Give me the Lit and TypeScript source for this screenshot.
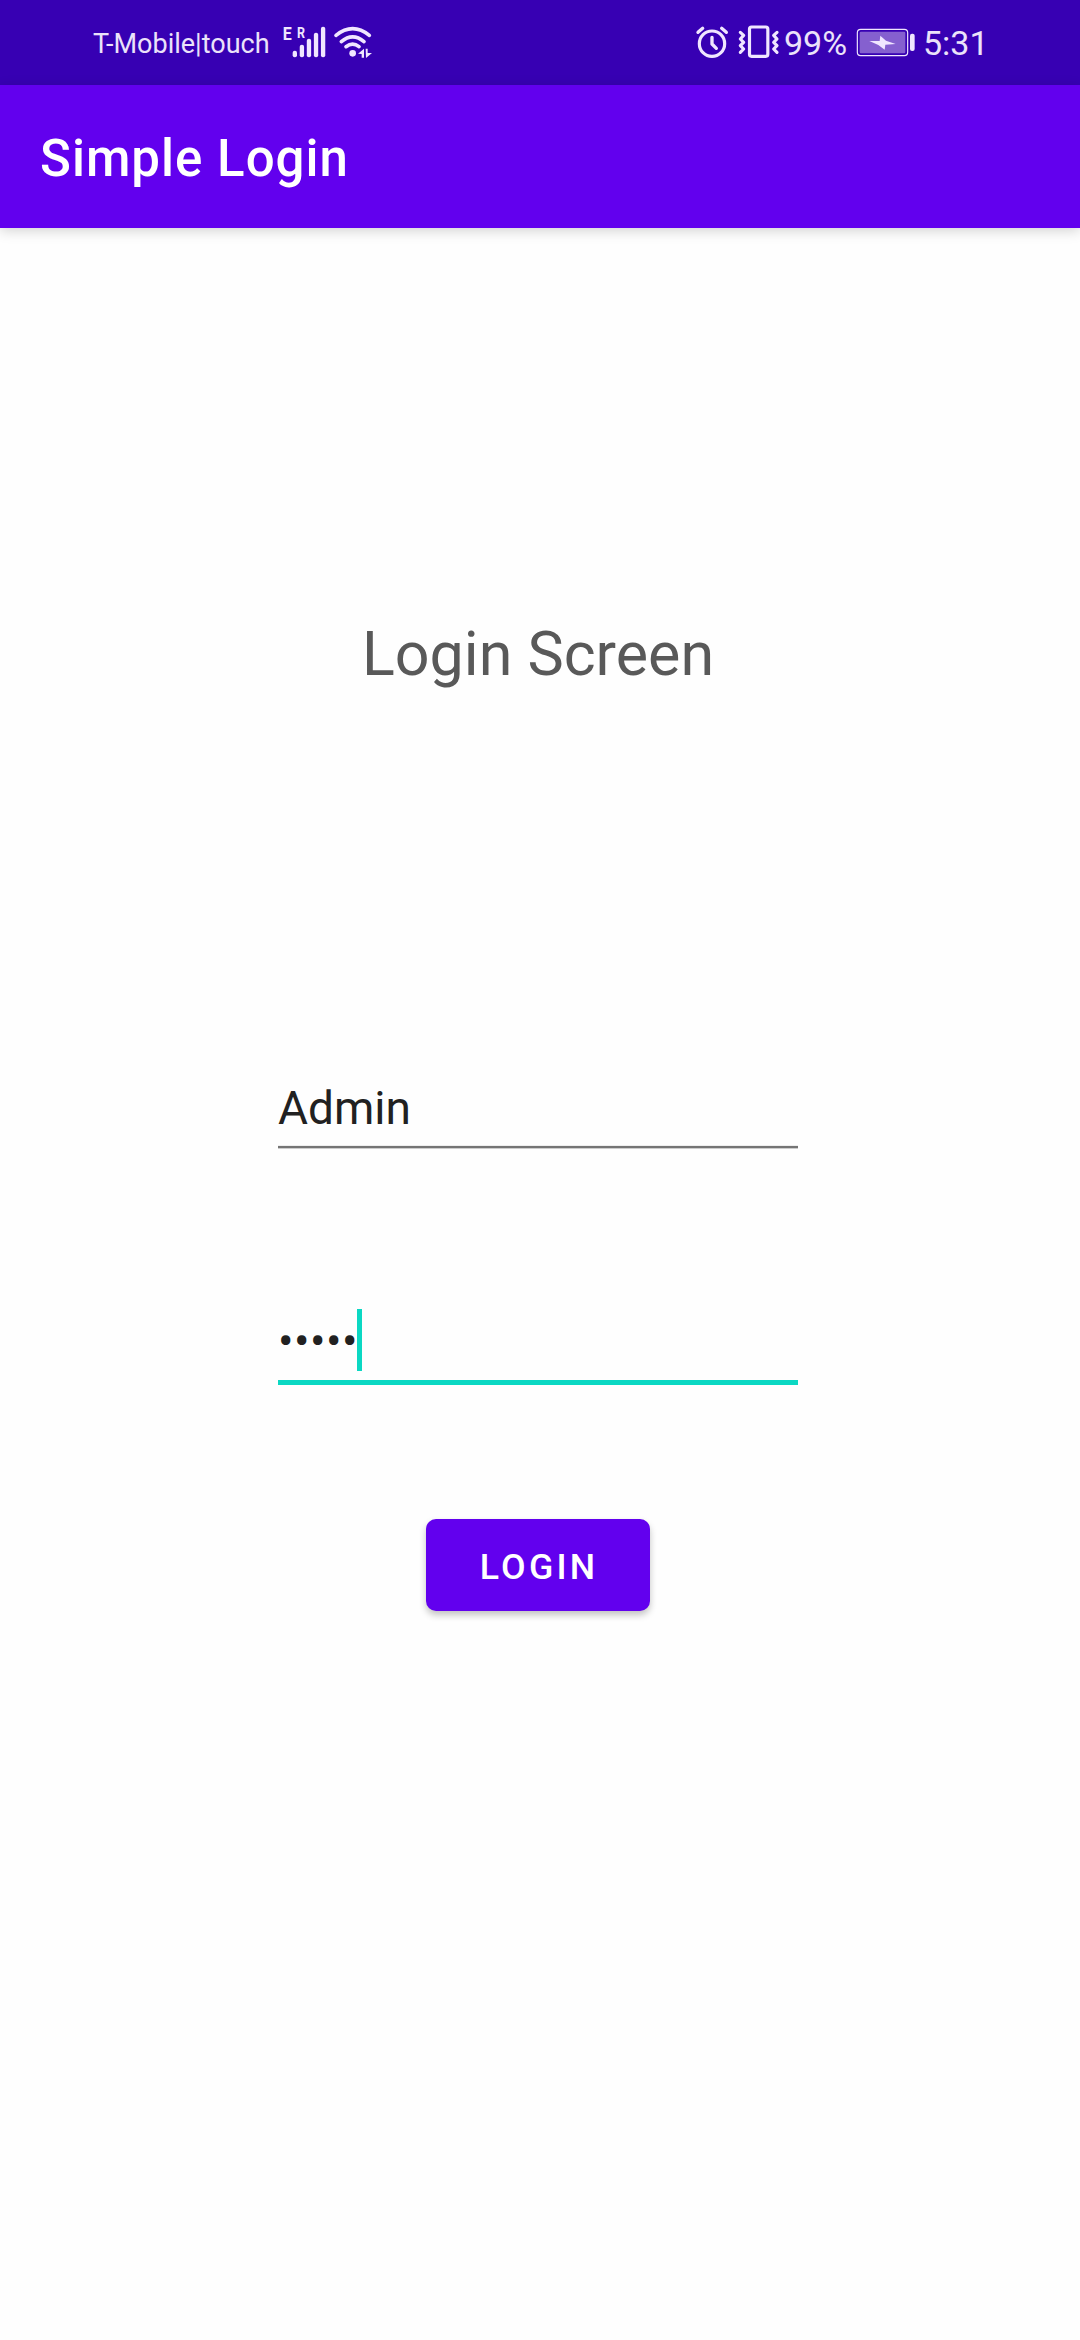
import { LitElement, html, css, svg } from "lit";
import { customElement, property } from "lit/decorators.js";

@customElement("status-bar")
class StatusBar extends LitElement {
  static styles = css`
    :host {
      display: flex;
      height: 85px;
      box-sizing: border-box;
      padding: 0 93px;
      background: #3700b3;
      color: #ebe2fa;
      font-family: Roboto, "Liberation Sans", sans-serif;
      line-height: 34px;
    }
    .side {
      display: flex;
      align-items: flex-start;
      white-space: nowrap;
    }
    .left {
      flex: 1;
    }
    .carrier {
      font-size: 27px;
      width: 188px;
      margin-top: 27px;
    }
    .level {
      font-size: 34px;
      width: 72px;
      margin-top: 26px;
    }
    .time {
      font-size: 34px;
      margin-top: 26px;
      width: 64px;
    }
    svg {
      display: block;
      flex: none;
      overflow: visible;
    }
    .signal {
      width: 91px;
      height: 42px;
      margin-top: 16px;
    }
    .alerts {
      width: 88px;
      height: 34px;
      margin-top: 25px;
    }
    .battery {
      width: 60px;
      height: 30px;
      margin: 27px 7px 0 0;
    }
    .fill {
      fill: #f0e6ff;
    }
    .line {
      fill: none;
      stroke: #f0e6ff;
      stroke-linecap: round;
      stroke-linejoin: round;
    }
    .charge {
      fill: #8560cf;
    }
    .tag {
      fill: #f0e6ff;
      font-weight: 700;
    }
  `;

  render() {
    const bars = [0, 1, 2, 3, 4];
    return html`
      <div class="side left">
        <span class="carrier">T-Mobile|touch</span>
        <svg class="signal" viewBox="33 18 273 126">
          <text class="tag" x="38" y="91" font-size="57" textLength="27" lengthAdjust="spacingAndGlyphs">E</text>
          <text class="tag" x="81" y="83" font-size="46" textLength="24" lengthAdjust="spacingAndGlyphs">R</text>
          ${bars.map(
            (i) => svg`<rect class="fill" x=${68 + i * 21.2} y=${122 - i * 18} width="13" height=${20 + i * 18} rx="6"></rect>`
          )}
          <path class="line" stroke-width="11" d="M198 76Q248 36 298 76M214 95Q248 66 282 95M228 110Q248 95 267 110"></path>
          <circle class="fill" cx="248" cy="130" r="10"></circle>
          <path class="fill" d="M264 131L282 116V143H275V132ZM287 116H293V129H306L288 144Z"></path>
        </svg>
      </div>
      <div class="side">
        <svg class="alerts" viewBox="48 45 264 102">
          <circle class="line" stroke-width="9.5" cx="96" cy="101" r="38"></circle>
          <path class="line" stroke-width="10" d="M96 82V102L109 115M54 67L68 55M125 55L139 67"></path>
          <rect class="line" stroke-width="9.5" x="208.5" y="51" width="55" height="88" rx="6"></rect>
          <path class="line" stroke-width="9.5" d="M181 67L191 76L181 87L191 97L181 107L191 117L181 127"></path>
          <path class="line" stroke-width="9.5" d="M291 67L281 76L291 87L281 97L291 107L281 117L291 127"></path>
        </svg>
        <span class="level">99%</span>
        <svg class="battery" viewBox="46 51 180 90">
          <rect class="line" stroke-width="3.5" x="50" y="58" width="151" height="79" rx="10"></rect>
          <rect class="charge" x="57" y="65" width="137" height="65" rx="4"></rect>
          <path class="fill" d="M86 93L117 93L119 77L136 92L165 102L134 104L132 119L113 105Z"></path>
          <rect class="fill" x="208" y="71" width="14" height="52" rx="6"></rect>
        </svg>
        <span class="time">5:31</span>
      </div>
    `;
  }
}

@customElement("app-bar")
class AppBar extends LitElement {
  static styles = css`
    :host {
      display: flex;
      align-items: center;
      height: 143px;
      padding: 5px 40px 0;
      box-sizing: border-box;
      background: #6200ee;
      box-shadow: 0 3px 12px rgba(0, 0, 0, 0.17);
    }
    .title {
      color: #fff;
      font: 500 51px/60px Roboto, "Liberation Sans", sans-serif;
      letter-spacing: 1.02px;
    }
  `;

  @property() heading = "";

  render() {
    return html`<span class="title">${this.heading}</span>`;
  }
}

@customElement("text-field")
class TextField extends LitElement {
  static styles = css`
    :host {
      display: block;
      width: 520px;
    }
    .row {
      display: flex;
      height: 62px;
      color: #212121;
      font: 400 46px/62px Roboto, "Liberation Sans", sans-serif;
    }
    .row.active {
      line-height: 65px;
    }
    .row.active .value {
      width: 79px;
      letter-spacing: 0.45px;
    }
    .caret {
      width: 5px;
      height: 62px;
      background: #0bd8c3;
    }
    .line {
      height: 4px;
      margin-top: 6px;
      background: linear-gradient(#eee 0 1px, #757575 1px 3px, #ccc 3px 4px);
    }
    .line.active {
      height: 5px;
      margin-top: 9px;
      background: #0bd8c3;
    }
  `;

  @property() value = "";
  @property({ type: Boolean }) active = false;

  render() {
    const state = this.active ? "active" : "";
    return html`
      <div class="row ${state}">
        <span class="value">${this.value}</span>
        ${this.active ? html`<span class="caret"></span>` : ""}
      </div>
      <div class="line ${state}"></div>
    `;
  }
}

@customElement("app-root")
class AppRoot extends LitElement {
  static styles = css`
    :host {
      display: flex;
      flex-direction: column;
      height: 2340px;
      background: #fefefe;
    }
    .content {
      display: flex;
      flex-direction: column;
      align-items: center;
      padding-right: 4px;
    }
    .heading {
      margin: 390px 0 0;
      color: #595959;
      font: 400 61px/72px Roboto, "Liberation Sans", sans-serif;
    }
    .name {
      margin-top: 387px;
    }
    .password {
      margin-top: 160px;
    }
    .login {
      width: 224px;
      height: 92px;
      margin-top: 134px;
      padding: 3px 0 0 2px;
      border: 0;
      border-radius: 10px;
      background: #6200ee;
      color: #fff;
      font: 500 35.7px/42px Roboto, "Liberation Sans", sans-serif;
      letter-spacing: 3.19px;
      box-shadow: 0 4px 7px rgba(0, 0, 0, 0.24);
    }
  `;

  render() {
    return html`
      <status-bar></status-bar>
      <app-bar heading="Simple Login"></app-bar>
      <main class="content">
        <h1 class="heading">Login Screen</h1>
        <text-field class="name" value="Admin"></text-field>
        <text-field class="password" value="•••••" active></text-field>
        <button class="login">LOGIN</button>
      </main>
    `;
  }
}
